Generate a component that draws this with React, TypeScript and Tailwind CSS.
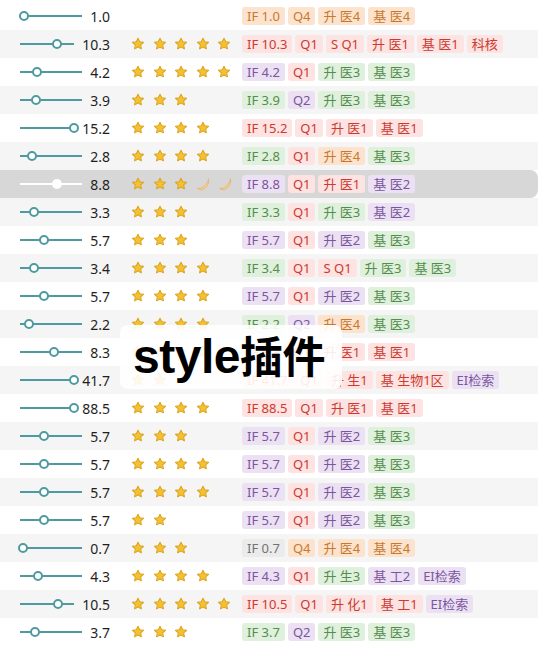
import React from "react";

type C = "o" | "r" | "p" | "g" | "k";
type Row = { v: string; s: number; tags: [string, C][]; hl?: boolean };

const TAG: Record<C, string> = {
  o: "bg-[#fce3cd] text-[#c9782f]",
  r: "bg-[#fde3e1] text-[#cc3a30]",
  p: "bg-[#ebe1f3] text-[#7b559e]",
  g: "bg-[#dff0dc] text-[#548d4f]",
  k: "bg-[#ebebeb] text-[#727272]",
};

const std57: [string, C][] = [["IF 5.7", "p"], ["Q1", "r"], ["升 医2", "p"], ["基 医3", "g"]];

const rows: Row[] = [
  { v: "1.0", s: 0, tags: [["IF 1.0", "o"], ["Q4", "o"], ["升 医4", "o"], ["基 医4", "o"]] },
  { v: "10.3", s: 5, tags: [["IF 10.3", "r"], ["Q1", "r"], ["S Q1", "r"], ["升 医1", "r"], ["基 医1", "r"], ["科核", "r"]] },
  { v: "4.2", s: 5, tags: [["IF 4.2", "p"], ["Q1", "r"], ["升 医3", "g"], ["基 医3", "g"]] },
  { v: "3.9", s: 3, tags: [["IF 3.9", "g"], ["Q2", "p"], ["升 医3", "g"], ["基 医3", "g"]] },
  { v: "15.2", s: 4, tags: [["IF 15.2", "r"], ["Q1", "r"], ["升 医1", "r"], ["基 医1", "r"]] },
  { v: "2.8", s: 4, tags: [["IF 2.8", "g"], ["Q1", "r"], ["升 医4", "o"], ["基 医3", "g"]] },
  { v: "8.8", s: 3, hl: true, tags: [["IF 8.8", "p"], ["Q1", "r"], ["升 医1", "r"], ["基 医2", "p"]] },
  { v: "3.3", s: 3, tags: [["IF 3.3", "g"], ["Q1", "r"], ["升 医3", "g"], ["基 医2", "p"]] },
  { v: "5.7", s: 3, tags: std57 },
  { v: "3.4", s: 4, tags: [["IF 3.4", "g"], ["Q1", "r"], ["S Q1", "r"], ["升 医3", "g"], ["基 医3", "g"]] },
  { v: "5.7", s: 4, tags: std57 },
  { v: "2.2", s: 4, tags: [["IF 2.2", "g"], ["Q2", "p"], ["升 医4", "o"], ["基 医3", "g"]] },
  { v: "8.3", s: 4, tags: [["IF 8.3", "p"], ["Q1", "r"], ["升 医1", "r"], ["基 医1", "r"]] },
  { v: "41.7", s: 2, tags: [["IF 41.7", "r"], ["Q1", "r"], ["升 生1", "r"], ["基 生物1区", "r"], ["EI检索", "p"]] },
  { v: "88.5", s: 4, tags: [["IF 88.5", "r"], ["Q1", "r"], ["升 医1", "r"], ["基 医1", "r"]] },
  { v: "5.7", s: 3, tags: std57 },
  { v: "5.7", s: 4, tags: std57 },
  { v: "5.7", s: 4, tags: std57 },
  { v: "5.7", s: 2, tags: std57 },
  { v: "0.7", s: 3, tags: [["IF 0.7", "k"], ["Q4", "o"], ["升 医4", "o"], ["基 医4", "o"]] },
  { v: "4.3", s: 4, tags: [["IF 4.3", "p"], ["Q1", "r"], ["升 生3", "g"], ["基 工2", "p"], ["EI检索", "p"]] },
  { v: "10.5", s: 5, tags: [["IF 10.5", "r"], ["Q1", "r"], ["升 化1", "r"], ["基 工1", "r"], ["EI检索", "p"]] },
  { v: "3.7", s: 3, tags: [["IF 3.7", "g"], ["Q2", "p"], ["升 医3", "g"], ["基 医3", "g"]] },
];

function Star() {
  return (
    <svg width="14" height="14" viewBox="0 0 24 24" className="shrink-0">
      <path
        d="M12 2.2l2.9 6.1 6.6.8-4.9 4.6 1.3 6.6L12 17.1l-5.9 3.2 1.3-6.6-4.9-4.6 6.6-.8z"
        fill="#f2c232"
        stroke="#dea420"
        strokeWidth="1.8"
        strokeLinejoin="round"
      />
    </svg>
  );
}

function Moon() {
  return (
    <svg width="15" height="15" viewBox="0 0 24 24" className="shrink-0">
      <path
        d="M20 3c1.5 6.5-2 14-9 17-3 1.2-6.5.3-8.5-2 4.5 1 8.5-1 11.5-4.2 3-3 5-6.5 6-10.8z"
        fill="#f6cf96"
        stroke="#e7ae62"
        strokeWidth="1.2"
        strokeLinejoin="round"
      />
    </svg>
  );
}

export default function App() {
  return (
    <div
      className="relative w-[538px] h-[655px] overflow-hidden bg-white pt-[2px]"
      style={{ fontFamily: '"Noto Sans", "Noto Sans CJK SC", sans-serif' }}
    >
      {rows.map((r, i) => {
        const frac = Math.min(parseFloat(r.v) / 15, 1);
        const bg = r.hl ? "bg-[#d7d7d7] rounded-r-[8px]" : i % 2 === 1 ? "bg-[#f5f5f5]" : "bg-white";
        const teal = r.hl ? "bg-white" : "bg-[#4f9aa0]";
        return (
          <div key={i} className={`flex items-center h-[28px] ${bg}`}>
            <div className="w-[110px] pl-[20px] flex items-center gap-[8px] shrink-0">
              <div className={`relative flex-1 h-[2px] ${teal}`}>
                <div
                  className={
                    r.hl
                      ? "absolute top-1/2 w-[10px] h-[10px] rounded-full bg-white -translate-x-1/2 -translate-y-1/2"
                      : "absolute top-1/2 w-[10px] h-[10px] rounded-full bg-white border-2 border-[#4f9aa0] -translate-x-1/2 -translate-y-1/2"
                  }
                  style={{ left: `${frac * 100}%` }}
                />
              </div>
              <span className="text-[14px] text-[#1f1f1f] leading-none pt-[1px]">{r.v}</span>
            </div>
            <div className="ml-[21px] w-[111px] shrink-0 flex items-center gap-[7.6px]">
              {Array.from({ length: r.s }).map((_, k) => (
                <Star key={k} />
              ))}
              {r.hl && (
                <>
                  <Moon />
                  <Moon />
                </>
              )}
            </div>
            <div className="flex items-center gap-[3px]">
              {r.tags.map(([t, c], k) => (
                <span
                  key={k}
                  className={`h-[18px] leading-[18px] px-[5px] rounded-[3px] text-[13px] whitespace-nowrap ${TAG[c]}`}
                >
                  {t}
                </span>
              ))}
            </div>
          </div>
        );
      })}
      <div className="absolute left-[120px] top-[325px] w-[222px] h-[64px] rounded-[8px] bg-white/90 flex items-center pl-[13px]">
        <span
          className="font-bold text-black text-[48px] leading-none tracking-[-0.5px]"
          style={{ fontFamily: '"Liberation Sans", "Noto Sans CJK SC", sans-serif' }}
        >
          style<span className="text-[43px]" style={{ fontFamily: '"Noto Sans CJK SC", sans-serif' }}>插件</span>
        </span>
      </div>
    </div>
  );
}
